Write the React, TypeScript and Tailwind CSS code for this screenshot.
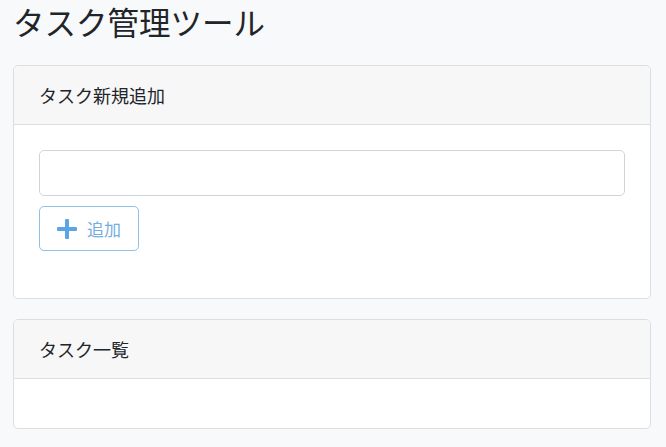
import React from "react";

const font = { fontFamily: '"Noto Sans CJK JP", "Noto Sans", sans-serif' };

const Card: React.FC<{ title: string; children?: React.ReactNode; bodyClass: string }> = ({
  title,
  children,
  bodyClass,
}) => {
  return (
    <section className="rounded-[5px] border border-[#dcdfe2] bg-white overflow-hidden">
      <div className="h-[59px] flex items-center px-[25px] bg-[#f7f7f7] border-b border-[#dcdfe2] text-[18px] text-[#212529]">
        {title}
      </div>
      <div className={bodyClass}>{children}</div>
    </section>
  );
};

export default function App() {
  return (
    <div className="min-h-[447px] bg-[#f8f9fb] px-[13px] pt-[2px] pb-4" style={font}>
      <h1 className="text-[31.5px] leading-[1.25] text-[#212529] mb-[24px]">タスク管理ツール</h1>

      <div className="flex flex-col gap-[20px] w-[638px]">
        <Card title="タスク新規追加" bodyClass="px-[25px] pt-[25px] pb-[47px]">
          <input
            type="text"
            className="block w-full h-[46px] rounded-[5px] border border-[#ced4da] bg-white px-3 outline-none"
          />
          <button className="mt-[10px] h-[45px] w-[100px] flex items-center justify-center gap-[10px] rounded-[5px] border border-[#8ec0e8] text-[#76aee0] text-[17px]">
            <svg width="20" height="20" viewBox="0 0 20 20">
              <path d="M10 1.5v17M1.5 10h17" stroke="#5aa5e4" strokeWidth="4" strokeLinecap="round" />
            </svg>
            <span>追加</span>
          </button>
        </Card>

        <Card title="タスク一覧" bodyClass="h-[49px]" />
      </div>
    </div>
  );
}
